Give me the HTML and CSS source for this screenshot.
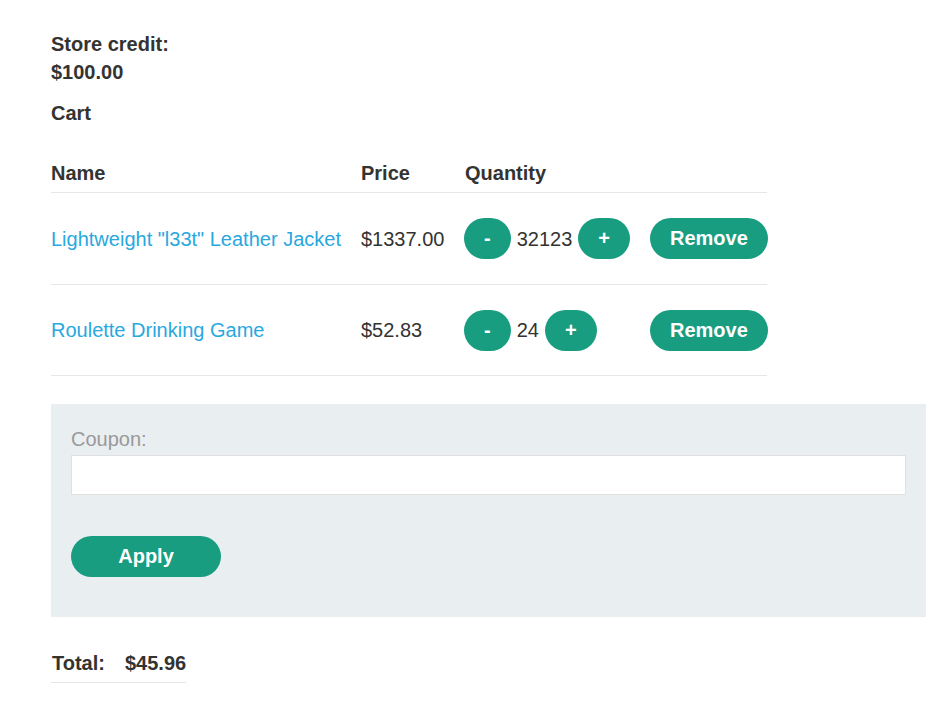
FILE: index.html
```html
<!DOCTYPE html>
<html>
<head>
<meta charset="utf-8">
<link rel="stylesheet" href="styles.css">
</head>
<body>
<div class="page">
  <div class="credit">
    <div>Store credit:</div>
    <div>$100.00</div>
  </div>
  <div class="cart-title">Cart</div>
  <div class="cart">
    <div class="row head">
      <div>Name</div>
      <div>Price</div>
      <div>Quantity</div>
      <div></div>
    </div>
    <div class="row item">
      <div><a href="#" class="link">Lightweight "l33t" Leather Jacket</a></div>
      <div>$1337.00</div>
      <div class="qty"><button class="btn small">-</button><span>32123</span><button class="btn small">+</button></div>
      <div><button class="btn">Remove</button></div>
    </div>
    <div class="row item">
      <div><a href="#" class="link">Roulette Drinking Game</a></div>
      <div>$52.83</div>
      <div class="qty"><button class="btn small">-</button><span>24</span><button class="btn small">+</button></div>
      <div><button class="btn">Remove</button></div>
    </div>
  </div>
  <div class="coupon">
    <label class="coupon-label">Coupon:</label>
    <input class="coupon-input" type="text">
    <button class="btn apply">Apply</button>
  </div>
  <div class="total">
    <span>Total:</span>
    <span>$45.96</span>
  </div>
</div>
</body>
</html>
```
FILE: styles.css
```css
* { box-sizing: border-box; }
body {
  margin: 0;
  background: #fff;
  font-family: "Liberation Sans", Arial, sans-serif;
  font-size: 20px;
  line-height: 28px;
  color: #333332;
}
.page {
  padding: 30px 24px 0 51px;
  width: 950px;
}
.credit {
  font-weight: bold;
}
.cart-title {
  font-weight: bold;
  margin-top: 13px;
}
.cart {
  width: 716px;
  margin-top: 32px;
}
.row {
  display: grid;
  grid-template-columns: 310px 104px 185px 117px;
  align-items: center;
  border-bottom: 1px solid #e6e6e6;
}
.row.head {
  font-weight: bold;
  padding-bottom: 5px;
}
.row.item {
  height: 91.5px;
  padding-top: 1px;
}
.link {
  color: #29a8e0;
  text-decoration: none;
}
.qty {
  display: flex;
  align-items: center;
  gap: 6px;
  margin-left: -1px;
}
.btn {
  font-family: "Liberation Sans", Arial, sans-serif;
  font-size: 20px;
  font-weight: bold;
  color: #fff;
  background: #189d80;
  border: none;
  border-radius: 21px;
  height: 41px;
  padding: 0 20px;
  line-height: 41px;
  cursor: pointer;
}
.coupon {
  margin-top: 28px;
  background: #e9eef1;
  padding: 21px 20px 40px 20px;
  width: 875px;
  display: flex;
  flex-direction: column;
  align-items: flex-start;
}
.coupon-label {
  color: #999999;
  line-height: 28px;
  margin-bottom: 2px;
}
.coupon-input {
  width: 835px;
  height: 40px;
  border: 1px solid #e0e0e0;
  background: #fff;
  font-size: 20px;
}
.apply {
  margin-top: 41px;
  width: 150px;
}
.total {
  margin-top: 32px;
  display: inline-flex;
  gap: 20px;
  font-weight: bold;
  padding-bottom: 5px;
  border-bottom: 1px solid #e6e6e6;
  padding-left: 1px;
}
```
